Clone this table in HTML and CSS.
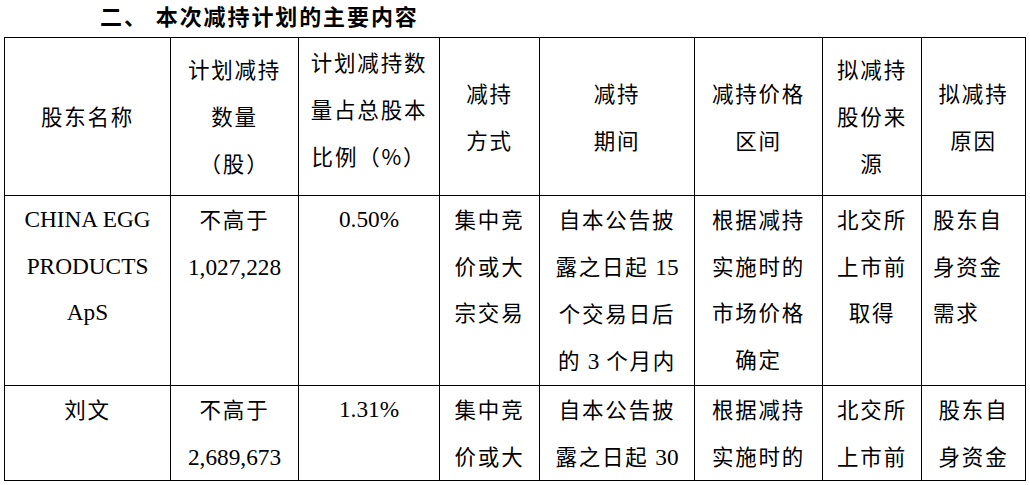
FILE: index.html
```html
<!DOCTYPE html>
<html lang="zh-CN">
<head>
<meta charset="utf-8">
<title>本次减持计划的主要内容</title>
<link rel="stylesheet" href="styles.css">
</head>
<body>
<h2 class="title"><span class="num">二、</span>本次减持计划的主要内容</h2>
<table class="plan">
  <colgroup>
    <col class="c1"><col class="c2"><col class="c3"><col class="c4">
    <col class="c5"><col class="c6"><col class="c7"><col class="c8">
  </colgroup>
  <tr class="head">
    <td>股东名称</td>
    <td>计划减持<br>数量<br>（股）</td>
    <td><div class="lift">计划减持数<br>量占总股本<br>比例（%）</div></td>
    <td>减持<br>方式</td>
    <td>减持<br>期间</td>
    <td>减持价格<br>区间</td>
    <td>拟减持<br>股份来<br>源</td>
    <td>拟减持<br>原因</td>
  </tr>
  <tr class="row1">
    <td class="latin">CHINA EGG<br>PRODUCTS<br>ApS</td>
    <td>不高于<br><span class="latin">1,027,228</span></td>
    <td class="latin">0.50%</td>
    <td>集中竞<br>价或大<br>宗交易</td>
    <td>自本公告披<br>露之日起 <span class="latin">15</span><br>个交易日后<br>的 <span class="latin">3</span> 个月内</td>
    <td>根据减持<br>实施时的<br>市场价格<br>确定</td>
    <td>北交所<br>上市前<br>取得</td>
    <td class="left">股东自<br>身资金<br>需求</td>
  </tr>
  <tr class="row2">
    <td>刘文</td>
    <td>不高于<br><span class="latin">2,689,673</span></td>
    <td class="latin">1.31%</td>
    <td>集中竞<br>价或大</td>
    <td>自本公告披<br>露之日起 <span class="latin">30</span></td>
    <td>根据减持<br>实施时的</td>
    <td>北交所<br>上市前</td>
    <td>股东自<br>身资金</td>
  </tr>
</table>
</body>
</html>
```
FILE: styles.css
```css
html, body {
  margin: 0;
  padding: 0;
  background: #ffffff;
}
body {
  font-family: "Liberation Serif", "Noto Sans CJK SC", serif;
  color: #000000;
  width: 1030px;
  height: 485px;
  overflow: hidden;
}
.title {
  margin: 0;
  height: 37px;
  padding-left: 100px;
  font-family: "Noto Sans CJK SC", sans-serif;
  font-weight: 700;
  font-size: 22px;
  line-height: 30px;
  letter-spacing: 1.9px;
  white-space: nowrap;
}
.title .num {
  margin-right: 8px;
}
.plan {
  margin-left: 4px;
  border-collapse: collapse;
  table-layout: fixed;
  width: 1022px;
  font-size: 23.3px;
  line-height: 46.7px;
}
.plan td {
  border: 1px solid #000000;
  padding: 0;
  text-align: center;
  white-space: nowrap;
  overflow: hidden;
  font-family: "Noto Sans CJK SC", sans-serif;
  font-size: 21.5px;
  letter-spacing: 1.8px;
}
.plan td.latin, .plan .latin {
  font-family: "Liberation Serif", serif;
  font-size: 23.3px;
  letter-spacing: 0;
}
.c1 { width: 166px; }
.c2 { width: 128px; }
.c3 { width: 141px; }
.c4 { width: 100px; }
.c5 { width: 155px; }
.c6 { width: 128px; }
.c7 { width: 99px; }
.c8 { width: 104px; }
.head td {
  height: 157px;
  vertical-align: middle;
}
.lift {
  margin-bottom: 14px;
}
.row1 td {
  height: 187px;
  vertical-align: top;
}
.row2 td {
  height: 94px;
  vertical-align: top;
}
.plan td.left {
  text-align: left;
  padding-left: 11px;
}
```
